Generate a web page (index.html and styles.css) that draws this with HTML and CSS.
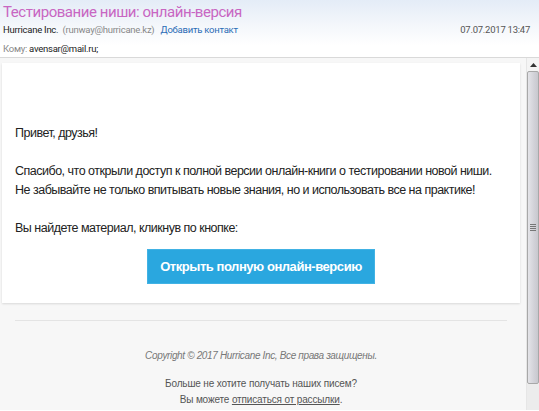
FILE: index.html
```html
<!DOCTYPE html>
<html lang="ru">
<head>
<meta charset="utf-8">
<link rel="stylesheet" href="styles.css">
</head>
<body>
<div class="header">
  <div class="subject">Тестирование ниши: онлайн-версия</div>
  <div class="from-row">
    <div class="from"><span class="sender">Hurricane Inc.</span> <span class="addr">(runway@hurricane.kz)</span> <span class="add">Добавить контакт</span></div>
    <div class="date">07.07.2017 13:47</div>
  </div>
  <div class="to-row"><span class="to-label">Кому:</span> <span class="to">avensar@mail.ru;</span></div>
</div>
<div class="main">
  <div class="viewer">
    <div class="card">
      <p>Привет, друзья!</p>
      <p>Спасибо, что открыли доступ к полной версии онлайн-книги о тестировании новой ниши.<br>Не забывайте не только впитывать новые знания, но и использовать все на практике!</p>
      <p class="last">Вы найдете материал, кликнув по кнопке:</p>
      <div class="btn-wrap"><span class="btn">Открыть полную онлайн-версию</span></div>
    </div>
    <div class="footer">
      <div class="rule"></div>
      <p class="copy">Copyright © 2017 Hurricane Inc, Все права защищены.</p>
      <p class="unsub">Больше не хотите получать наших писем?<br>Вы можете <span class="link">отписаться от рассылки</span>.</p>
    </div>
  </div>
  <div class="scrollbar">
    <div class="arrow"><svg width="7" height="4" viewBox="0 0 7 4"><path d="M0 4 L3.5 0 L7 4 Z" fill="#333"/></svg></div>
    <div class="thumb"><div class="grip"></div></div>
    <div class="track"></div>
  </div>
</div>
</body>
</html>
```
FILE: styles.css
```css
html, body {
  margin: 0;
  padding: 0;
}
body {
  width: 539px;
  height: 411px;
  overflow: hidden;
  background: #ffffff;
  font-family: Roboto, "Open Sans", sans-serif;
}
.header {
  height: 58px;
  box-sizing: border-box;
  padding: 0 0 0 3px;
  background: linear-gradient(to bottom, #e4ecf7 0%, #f4f7fb 45%, #ffffff 80%);
  border-bottom: 1px solid #d9d9d9;
}
.subject {
  font-size: 15px;
  line-height: 22px;
  color: #c866c2;
  padding-top: 1px;
  letter-spacing: -0.45px;
}
.from-row {
  display: flex;
  justify-content: space-between;
  align-items: center;
  font-size: 9.5px;
  line-height: 14px;
  letter-spacing: -0.25px;
  padding-right: 9px;
}
.sender { color: #222; }
.addr { color: #888; margin-left: 2px; }
.add { color: #2a6cb6; margin-left: 4px; }
.date { color: #555; }
.to-row {
  font-size: 9.5px;
  line-height: 14px;
  margin-top: 5px;
  letter-spacing: -0.25px;
}
.to-label { color: #888; }
.to { color: #222; }
.main {
  display: flex;
  height: 352px;
}
.viewer {
  flex: 1;
  background: #f7f7f7;
  padding: 5px 6px 0 2px;
  overflow: hidden;
}
.card {
  background: #ffffff;
  box-shadow: 0 1px 2px rgba(0,0,0,0.12);
  padding: 61px 13px 19px 13px;
  font-family: "Liberation Sans", Arial, sans-serif;
  font-size: 12.5px;
  letter-spacing: -0.5px;
  line-height: 19px;
  color: #222;
}
.card p {
  margin: 0 0 19px 0;
}
.card p.last {
  margin-bottom: 11px;
}
.btn-wrap {
  display: flex;
  justify-content: center;
}
.btn {
  display: block;
  background: #2aa7df;
  border: 1px solid #41b2e4;
  color: #ffffff;
  font-weight: bold;
  font-size: 13px;
  letter-spacing: -0.45px;
  line-height: 33px;
  padding: 0 12px;
}
.footer {
  padding: 17px 13px 0 13px;
  font-family: "Liberation Sans", Arial, sans-serif;
  text-align: center;
}
.rule {
  height: 1px;
  background: #e4e4e4;
}
.copy {
  margin: 28px 0 0 0;
  font-size: 10px;
  font-style: italic;
  color: #777;
  line-height: 14px;
  letter-spacing: -0.35px;
}
.unsub {
  margin: 13px 0 0 0;
  font-size: 10px;
  color: #555;
  line-height: 16px;
  letter-spacing: -0.15px;
}
.link {
  text-decoration: underline;
}
.scrollbar {
  width: 12px;
  display: flex;
  flex-direction: column;
  background: #f0f0f0;
  border-left: 1px solid #e6e6e6;
}
.arrow {
  height: 13px;
  display: flex;
  align-items: center;
  justify-content: center;
  background: #f4f4f4;
}
.thumb {
  height: 313px;
  box-sizing: border-box;
  border: 1px solid #a8a8a8;
  border-radius: 2px;
  background: linear-gradient(to right, #e4e4e8, #d2d2d8 60%, #c8c8ce);
  display: flex;
  align-items: center;
  justify-content: center;
}
.grip {
  width: 6px;
  height: 7px;
  background: repeating-linear-gradient(to bottom, #777 0 1px, transparent 1px 2px);
}
.track {
  flex: 1;
  background: #ececec;
}
```
